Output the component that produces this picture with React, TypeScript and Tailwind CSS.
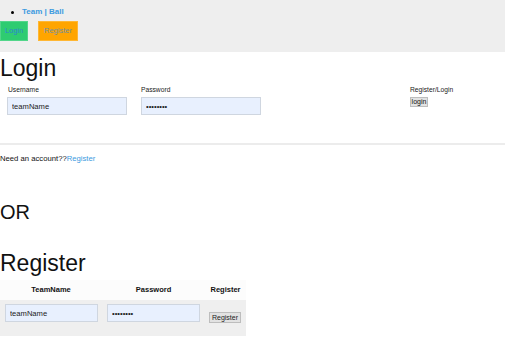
import React from "react";

const font = { fontFamily: '"Liberation Sans", Arial, sans-serif' };

function Field({ type, value, w }: { type: string; value: string; w: string }) {
  return (
    <input
      type={type}
      defaultValue={value}
      className={`block ${w} h-[18px] bg-[#e8f0fe] border border-[#cfd6e0] px-[4px] text-[7.6px] text-[#222] outline-none`}
      style={font}
    />
  );
}

export default function App() {
  return (
    <div className="w-[505px] h-[362px] bg-white text-[#111] overflow-hidden" style={font}>
      <div className="bg-[#eeeeee] h-[52px] pt-[6px]">
        <div className="flex items-center h-[12px]">
          <span className="ml-[11px] w-[3px] h-[3px] rounded-full bg-black" />
          <span className="ml-[8px] text-[8px] leading-[12px] font-bold text-[#3d9be0]">Team | Ball</span>
        </div>
        <div className="flex mt-[3px] gap-[10px]">
          <button className="block w-[28px] h-[20px] bg-[#2ecc71] text-[#2a86d0] text-[7.4px] leading-[18px] border border-[#52d68a] p-0" style={font}>Login</button>
          <button className="block w-[40px] h-[20px] bg-[#ffa500] text-[#6f8fa0] text-[7.5px] leading-[18px] border border-[#ffb733] p-0" style={font}>Register</button>
        </div>
      </div>

      <h1 className="mt-[3px] text-[23px] leading-[26px]">Login</h1>

      <div className="flex mt-[5px] pl-[7px]">
        <div className="w-[134px] flex flex-col">
          <span className="text-[6.7px] leading-[8px] pl-[1px] text-[#222]">Username</span>
          <div className="mt-[3px]"><Field type="text" value="teamName" w="w-[120px]" /></div>
        </div>
        <div className="w-[269px] flex flex-col">
          <span className="text-[6.7px] leading-[8px] text-[#222]">Password</span>
          <div className="mt-[3px]"><Field type="password" value="password" w="w-[120px]" /></div>
        </div>
        <div className="flex flex-col items-start">
          <span className="text-[6.7px] leading-[8px] text-[#222]">Register/Login</span>
          <button className="block mt-[3px] w-[18px] h-[10px] bg-[#e2e2e2] border border-[#bdbdbd] text-[7px] leading-[8px] text-[#111] p-0" style={font}>login</button>
        </div>
      </div>

      <div className="mt-[28px] h-[2px] bg-[#ececec]" />

      <p className="mt-[9px] text-[7.7px] leading-[10px] text-[#111]">
        Need an account??<span className="text-[#3d9be0]">Register</span>
      </p>

      <div className="mt-[36px] text-[20px] leading-[24px]">OR</div>

      <h1 className="mt-[26px] text-[23px] leading-[26px]">Register</h1>

      <div className="mt-[4px] w-[246px] grid grid-cols-[102px_103px_41px]">
        <div className="h-[20px] bg-[#fcfcfc] flex items-center justify-center text-[7.5px] font-bold">TeamName</div>
        <div className="h-[20px] bg-[#fcfcfc] flex items-center justify-center text-[7.5px] font-bold">Password</div>
        <div className="h-[20px] bg-[#fcfcfc] flex items-center justify-center text-[7.5px] font-bold">Register</div>
        <div className="h-[36px] bg-[#efefef] pl-[5px] pt-[4px]"><Field type="text" value="teamName" w="w-[93px]" /></div>
        <div className="h-[36px] bg-[#efefef] pl-[5px] pt-[4px]"><Field type="password" value="password" w="w-[93px]" /></div>
        <div className="h-[36px] bg-[#efefef] pl-[4px] pt-[12px]">
          <button className="block w-[32px] h-[11px] bg-[#e2e2e2] border border-[#bdbdbd] text-[7px] leading-[9px] text-[#222] p-0" style={font}>Register</button>
        </div>
      </div>
    </div>
  );
}
